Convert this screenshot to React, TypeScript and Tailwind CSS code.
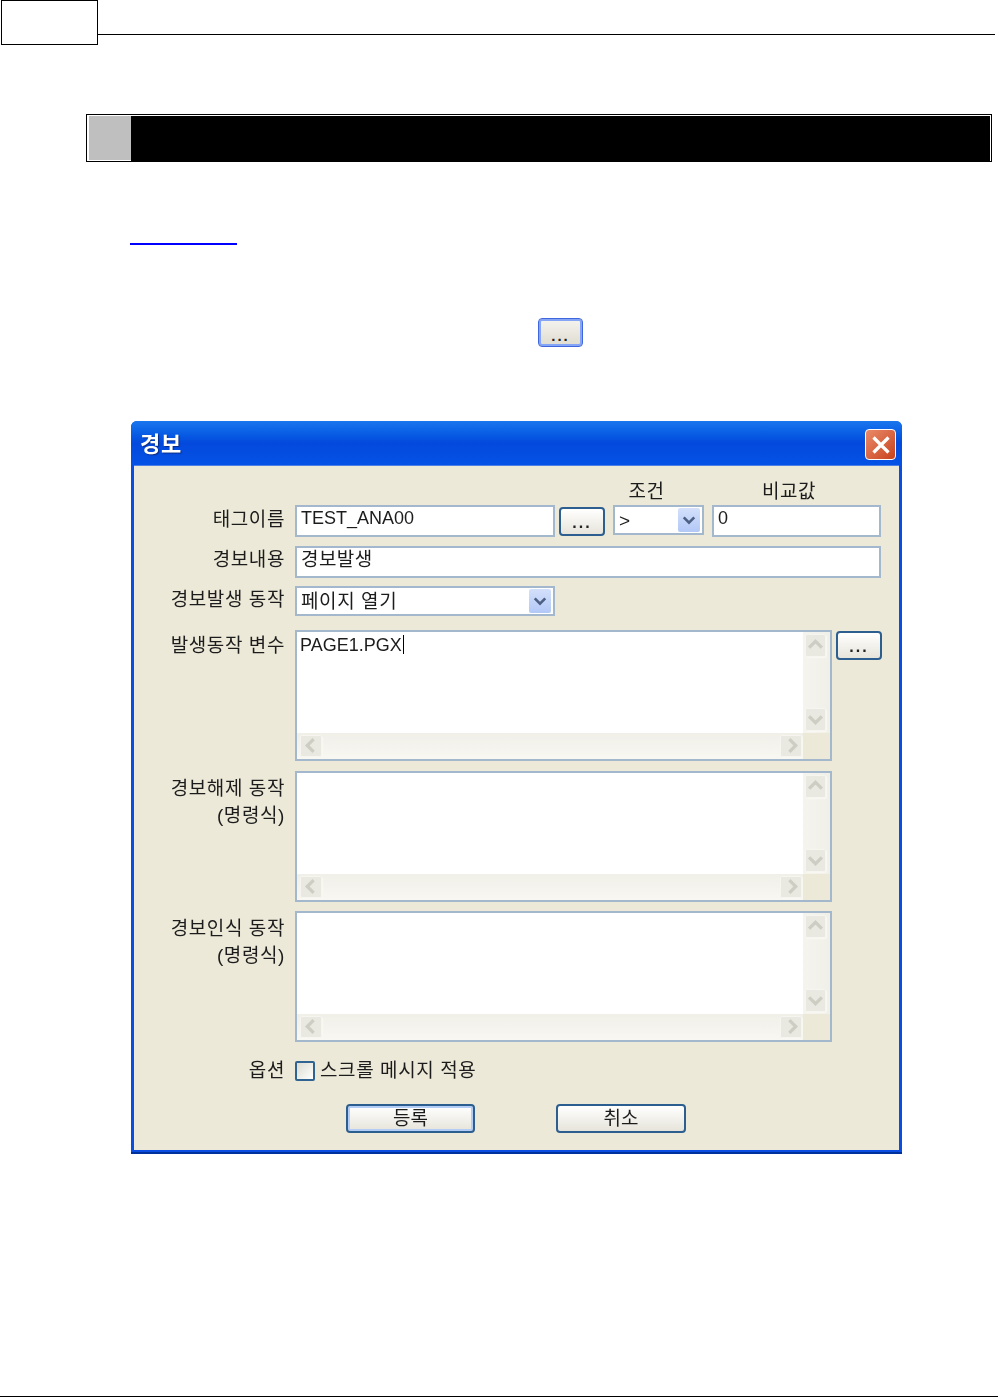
import { ReactNode } from "react";

const font = "font-['Liberation_Sans','Noto_Sans_CJK_KR',sans-serif]";

function Chevron({ dir, className }: { dir: "up" | "down" | "left" | "right"; className: string }) {
  const points = {
    up: "2,10 8,4 14,10",
    down: "2,5 8,11 14,5",
    left: "10,2 4,8 10,14",
    right: "6,2 12,8 6,14",
  };
  return (
    <svg viewBox="0 0 16 16" className={className} fill="none" stroke="currentColor" strokeWidth="3">
      <polyline points={points[dir]} />
    </svg>
  );
}

function Label({ children, className = "" }: { children: ReactNode; className?: string }) {
  return (
    <div className={`w-[151px] shrink-0 whitespace-pre-line text-right text-[19px] leading-[27px] tracking-[0.6px] text-[#1c1c1c] ${className}`}>
      {children}
    </div>
  );
}

function Field({ value, className }: { value?: string; className: string }) {
  return (
    <div className={`flex items-start border-2 border-[#a3b8cc] bg-white pl-1 text-[18px] leading-[22px] text-[#1c1c1c] ${className}`}>
      {value}
    </div>
  );
}

function DotsButton({ className = "" }: { className?: string }) {
  return (
    <button className={`flex h-[29px] w-[46px] items-end justify-center rounded-[4px] border-2 border-[#2c5f8f] bg-gradient-to-b from-white to-[#e6e4da] pb-[3px] text-[16px] leading-[16px] font-bold tracking-[2px] text-[#222] ${className}`}>
      ...
    </button>
  );
}

function Dropdown({ value, className }: { value: string; className: string }) {
  return (
    <div className={`flex items-center justify-between border-2 border-[#a3b8cc] bg-white pr-[2px] pl-1 text-[19px] leading-[24px] tracking-[0.6px] text-[#1c1c1c] ${className}`}>
      <span className="pt-px">{value}</span>
      <div className="flex h-[24px] w-[22px] items-center justify-center rounded-[2px] bg-gradient-to-b from-[#d4e0fb] to-[#b2c8f6]">
        <Chevron dir="down" className="h-[14px] w-[14px] text-[#4d6185]" />
      </div>
    </div>
  );
}

function ScrollButton({ dir, className = "" }: { dir: "up" | "down" | "left" | "right"; className?: string }) {
  return (
    <div className={`flex items-center justify-center rounded-[2px] border border-[#f6f5f0] bg-[#e9e8e1] shadow-[1px_1px_1px_#f9f8f2] ${className}`}>
      <Chevron dir={dir} className="h-[17px] w-[17px] text-[#cdcdc4]" />
    </div>
  );
}

function ScrollArea({ value, className = "" }: { value?: string; className?: string }) {
  return (
    <div className={`grid h-[131px] w-[537px] grid-cols-[506px_27px] grid-rows-[101px_26px] border-2 border-[#a3b8cc] bg-white ${className}`}>
      <div className="pl-[3px] text-[18px] leading-[18px] text-[#1c1c1c]">
        {value}
        {value && <span className="ml-[1px] inline-block h-[19px] w-px translate-y-[3px] bg-black" />}
      </div>
      <div className="flex flex-col justify-between bg-gradient-to-r from-[#f5f4ee] to-[#f0efe8] py-[2px] pr-[4px] pl-[2px]">
        <ScrollButton dir="up" className="h-[23px]" />
        <ScrollButton dir="down" className="h-[23px]" />
      </div>
      <div className="flex items-center justify-between bg-gradient-to-b from-[#f0efe8] to-[#f8f7f2] pr-[1px] pb-px pl-[3px]">
        <ScrollButton dir="left" className="h-[22px] w-[22px]" />
        <ScrollButton dir="right" className="h-[22px] w-[22px]" />
      </div>
      <div className="bg-[#ece9d8]" />
    </div>
  );
}

export default function App() {
  return (
    <div className={`flex h-[1397px] w-[999px] flex-col overflow-hidden bg-white ${font}`}>
      {/* Page header tab and rule */}
      <header className="flex h-[45px] shrink-0 items-start pl-px pr-[4px]">
        <div className="h-[45px] w-[97px] border border-black bg-white" />
        <div className="mt-[34px] h-px flex-1 bg-black" />
      </header>

      {/* Section bar */}
      <div className="mt-[69px] ml-[86px] h-[48px] w-[906px] shrink-0 bg-black p-px">
        <div className="flex h-full border-t border-r border-white">
          <div className="h-[45px] w-[44px] border-b border-l-2 border-white bg-[#bfbfbf]" />
        </div>
      </div>

      {/* Link underline */}
      <div className="mt-[81px] ml-[130px] h-[2px] w-[107px] shrink-0 bg-[#0000ff]" />

      {/* Inline button sample */}
      <button className="mt-[73px] ml-[538px] flex h-[29px] w-[45px] shrink-0 items-end justify-center rounded-[4px] border border-[#3f66dc] bg-gradient-to-b from-[#f5f4ef] to-[#dfdcd0] pb-[3px] text-[15px] leading-[15px] font-bold tracking-[2px] text-[#222] shadow-[inset_0_0_0_2px_#86a5f5]">
        ...
      </button>

      {/* Dialog */}
      <section className="mt-[74px] ml-[131px] flex h-[733px] w-[771px] shrink-0 flex-col rounded-t-[6px] border-b-2 border-[#00309c] bg-[#0a4de0] blur-[0.3px]">
        <div className="flex h-[44px] shrink-0 items-center justify-between rounded-t-[6px] bg-gradient-to-b from-[#1a76ee] via-[#0449dd] to-[#0552e6] pr-[6px] pl-[9px]">
          <span className="mt-[2px] text-[22px] font-bold tracking-[0.8px] text-white [text-shadow:1px_1px_1px_#0a2a80]">경보</span>
          <div className="mt-[3px] flex h-[31px] w-[31px] items-center justify-center rounded-[4px] border border-white bg-gradient-to-br from-[#e98a68] to-[#c8401a]">
            <svg viewBox="0 0 16 16" className="h-[20px] w-[20px] text-white" fill="none" stroke="currentColor" strokeWidth="2.6">
              <path d="M2 2 L14 14 M14 2 L2 14" />
            </svg>
          </div>
        </div>

        <div className="mx-[3px] mb-[2px] flex flex-1 flex-col border-t border-[#4d7fe8] bg-[#ece9d8]">
          {/* Column captions */}
          <div className="flex h-[39px] items-end pl-[161px] text-[19px] leading-[27px] tracking-[0.6px] text-[#1c1c1c]">
            <div className="w-[306px]" />
            <div className="w-[91px] text-center">조건</div>
            <div className="ml-[21px] w-[152px] text-center">비교값</div>
          </div>

          <div className="flex">
            <Label className="pt-px">태그이름</Label>
            <div className="ml-[10px] flex items-start">
              <Field value="TEST_ANA00" className="h-[32px] w-[260px]" />
              <DotsButton className="mt-[2px] ml-[4px]" />
              <Dropdown value=">" className="ml-[8px] h-[30px] w-[91px]" />
              <Field value="0" className="ml-[8px] h-[32px] w-[169px]" />
            </div>
          </div>

          <div className="mt-[9px] flex">
            <Label>경보내용</Label>
            <Field value="경보발생" className="ml-[10px] h-[32px] w-[586px] pt-px text-[19px] tracking-[0.4px]" />
          </div>

          <div className="mt-[8px] flex">
            <Label>경보발생 동작</Label>
            <Dropdown value="페이지 열기" className="ml-[10px] h-[30px] w-[260px]" />
          </div>

          <div className="mt-[14px] flex items-start">
            <Label className="pt-[2px]">발생동작 변수</Label>
            <ScrollArea value="PAGE1.PGX" className="ml-[10px]" />
            <DotsButton className="mt-px ml-[4px] w-[45px]" />
          </div>

          <div className="mt-[10px] flex items-start">
            <Label className="pt-[4px]">{"경보해제 동작\n(명령식)"}</Label>
            <ScrollArea className="ml-[10px]" />
          </div>

          <div className="mt-[9px] flex items-start">
            <Label className="pt-[4px]">{"경보인식 동작\n(명령식)"}</Label>
            <ScrollArea className="ml-[10px]" />
          </div>

          <div className="mt-[15px] flex items-center">
            <Label>옵션</Label>
            <div className="ml-[10px] h-[20px] w-[20px] rounded-[2px] border-2 border-[#2f6492] bg-gradient-to-br from-[#dcdcd2] to-white" />
            <span className="ml-[5px] text-[19px] leading-[27px] tracking-[0.6px] text-[#1c1c1c]">스크롤 메시지 적용</span>
          </div>

          <div className="mt-[20px] flex pl-[212px]">
            <button className="h-[29px] w-[129px] rounded-[4px] border-2 border-[#2c5f8f] bg-gradient-to-b from-white to-[#e6e4da] text-[19px] leading-[22px] text-[#1c1c1c] shadow-[inset_0_0_0_2px_#b4cdf6]">
              등록
            </button>
            <button className="ml-[81px] h-[29px] w-[130px] rounded-[4px] border-2 border-[#2c5f8f] bg-gradient-to-b from-white to-[#e6e4da] text-[19px] leading-[22px] text-[#1c1c1c]">
              취소
            </button>
          </div>
        </div>
      </section>

      {/* Page footer rule */}
      <div className="mt-auto mr-px h-px shrink-0 bg-black" />
    </div>
  );
}
